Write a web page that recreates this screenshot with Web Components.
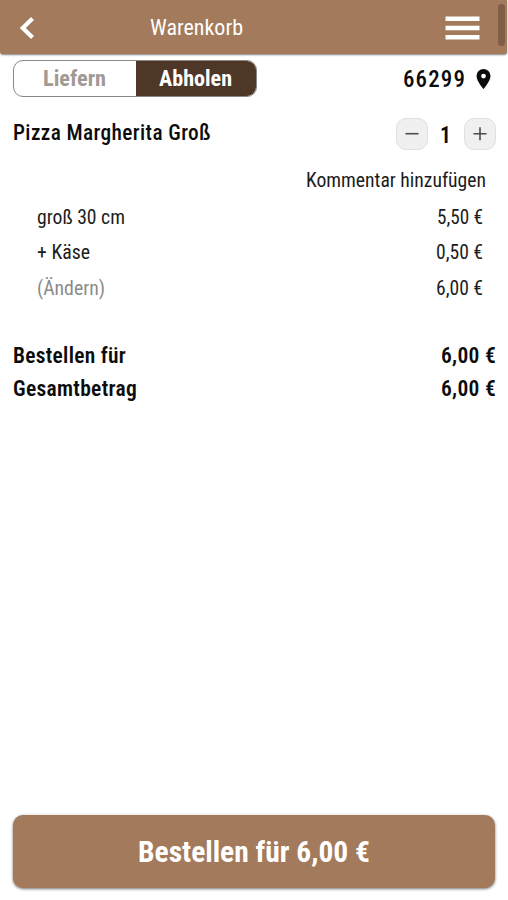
<!DOCTYPE html>
<html lang="de">
<head>
<meta charset="utf-8">
<title>Warenkorb</title>
<style>
html,body{margin:0;height:100%;background:#fff;overflow:hidden}
body{font-family:"Roboto Condensed",Roboto,"Liberation Sans",sans-serif;font-stretch:75%;color:#0c0c0c}
</style>
</head>
<body>
<cart-page></cart-page>
<script>
/* One line of text set to an exact width. */
class FitText extends HTMLElement{
  connectedCallback(){
    const r=this.attachShadow({mode:'open'});
    r.innerHTML=`<style>:host{display:block;flex:none;white-space:nowrap}
    span{display:inline-block;transform-origin:0 50%}</style><span><slot></slot></span>`;
    const w=+this.getAttribute('w');
    this.style.width=w+'px';
    const s=r.querySelector('span');
    s.style.transform=`scaleX(${w/s.getBoundingClientRect().width})`;
  }
}

class AppHeader extends HTMLElement{
  connectedCallback(){
    this.attachShadow({mode:'open'}).innerHTML=`<style>
    :host{display:grid;grid-template-columns:150px 1fr auto 16px;align-items:center;box-sizing:border-box;height:54px;width:507px;padding:0 1px 0 0;
      background:#a37a5b;color:#fff;font-size:22.5px;line-height:26px;border-radius:0 0 3px 3px;box-shadow:0 1px 2px rgba(0,0,0,.5);flex:none}
    svg{display:block}
    .back{margin:1px 0 0 19px}.menu{margin-right:10px}
    .bar{align-self:start;margin:4px 0 0 8px;width:7px;height:42px;border-radius:3.5px;background:#805d45}
    </style>
    <svg class="back" width="16" height="24" viewBox="0 0 16 24"><path d="M13.5 2.5 3.8 12 13.5 21.5" fill="none" stroke="#fff" stroke-width="4.2"/></svg>
    <slot></slot>
    <svg class="menu" width="35" height="26" viewBox="0 0 35 26"><path d="M0.5 4.8h34M0.5 14h34M0.5 23.2h34" stroke="#fff" stroke-width="4.6"/></svg>
    <div class="bar"></div>`;
  }
}

class ModeSwitch extends HTMLElement{
  connectedCallback(){
    this.attachShadow({mode:'open'}).innerHTML=`<style>
    :host{display:grid;grid-template-columns:122px 1fr;box-sizing:border-box;width:244px;height:37px;border:1px solid #8d8681;border-radius:10px;
      overflow:hidden;font-size:22px;line-height:26px;font-weight:700;background:#fff}
    div{display:flex;align-items:center;justify-content:center}
    .off{color:#a19a94;padding-right:1px}.on{background:#4f3728;color:#fff;padding-right:1px}
    </style><div class="off"><slot name="off"></slot></div><div class="on"><slot name="on"></slot></div>`;
  }
}

class StepButton extends HTMLElement{
  connectedCallback(){
    const plus=this.getAttribute('kind')==='plus';
    this.attachShadow({mode:'open'}).innerHTML=`<style>
    :host{display:block;box-sizing:border-box;width:32px;height:32px;border:1px solid #e0e0e0;border-radius:10px;background:#f0f0f0}
    svg{display:block}</style>
    <svg width="30" height="30" viewBox="0 0 30 30"><path d="M8.5 14.7h13${plus?'M15 8.2v13':''}" stroke="#4c4c4c" stroke-width="1.6"/></svg>`;
  }
}

class PriceRow extends HTMLElement{
  connectedCallback(){
    this.attachShadow({mode:'open'}).innerHTML=`<style>
    :host{display:flex;justify-content:space-between;align-items:center;font-size:20px;line-height:24px;height:35.5px;padding:0 25px 0 37px;color:#1c1c1c}
    :host([muted]) slot[name=label]{color:#8b8b8b}
    :host([total]){font-size:22px;line-height:26px;height:33px;font-weight:600;letter-spacing:.3px;padding:0 12.5px 0 13px;color:#0c0c0c}
    </style><slot name="label"></slot><slot></slot>`;
  }
}

class OrderButton extends HTMLElement{
  connectedCallback(){
    this.attachShadow({mode:'open'}).innerHTML=`<style>
    :host{display:flex;align-items:center;justify-content:center;margin:auto 13px 12px;height:73px;border-radius:10px;background:#a37a5b;
      color:#fff;font-size:30px;line-height:36px;font-weight:700;box-shadow:0 1px 3px rgba(0,0,0,.55)}
    </style><slot></slot>`;
  }
}

class CartPage extends HTMLElement{
  connectedCallback(){
    this.attachShadow({mode:'open'}).innerHTML=`<style>
    :host{display:flex;flex-direction:column;width:508px;height:900px;background:#fff}
    .top,.item{display:flex;align-items:center;justify-content:space-between;padding:0 12px 0 13px;flex:none}
    .top{padding-top:6px;height:37px}
    .zip{display:flex;align-items:center;font-size:24px;line-height:28px;font-weight:500;letter-spacing:1.2px}
    .zip fit-text{margin-top:1px}
    .zip svg{margin:0 5px 0 10px}
    .item{height:32px;margin-top:21px}
    .name{font-size:22px;line-height:26px;font-weight:550;letter-spacing:.4px;margin-top:-3px}
    .qty{display:flex;align-items:center;font-size:24px;line-height:28px;font-weight:600}
    .qty fit-text{margin:1px 13px 0 12px}
    .note{display:flex;justify-content:flex-end;font-size:20px;line-height:24px;margin:18px 22px 7px 0;color:#1c1c1c}
    .sum{margin-top:34px}
    </style>
    <app-header><fit-text w="93">Warenkorb</fit-text></app-header>
    <div class="top">
      <mode-switch><fit-text slot="off" w="63">Liefern</fit-text><fit-text slot="on" w="73">Abholen</fit-text></mode-switch>
      <div class="zip"><fit-text w="63">66299</fit-text>
        <svg width="15" height="20" viewBox="0 0 15 20"><path fill-rule="evenodd" d="M7.5 0A7 7 0 0 0 .5 7c0 5 7 13 7 13s7-8 7-13a7 7 0 0 0-7-7Zm0 4.7a2.4 2.4 0 1 1 0 4.8 2.4 2.4 0 0 1 0-4.8Z" fill="#0c0c0c"/></svg></div>
    </div>
    <div class="item">
      <fit-text class="name" w="198">Pizza Margherita Groß</fit-text>
      <div class="qty"><step-button kind="minus"></step-button><fit-text w="11">1</fit-text><step-button kind="plus"></step-button></div>
    </div>
    <div class="note"><fit-text w="180">Kommentar hinzufügen</fit-text></div>
    <price-row><fit-text slot="label" w="88">groß 30 cm</fit-text><fit-text w="46">5,50 €</fit-text></price-row>
    <price-row><fit-text slot="label" w="53">+ Käse</fit-text><fit-text w="47">0,50 €</fit-text></price-row>
    <price-row muted><fit-text slot="label" w="68">(Ändern)</fit-text><fit-text w="47">6,00 €</fit-text></price-row>
    <div class="sum">
      <price-row total><fit-text slot="label" w="113">Bestellen für</fit-text><fit-text w="55">6,00 €</fit-text></price-row>
      <price-row total><fit-text slot="label" w="124">Gesamtbetrag</fit-text><fit-text w="55">6,00 €</fit-text></price-row>
    </div>
    <order-button><fit-text w="232">Bestellen für 6,00 €</fit-text></order-button>`;
  }
}
/* Containers are defined first so fonts and sizes are in place when FitText measures. */
customElements.define('cart-page',CartPage);
customElements.define('app-header',AppHeader);
customElements.define('mode-switch',ModeSwitch);
customElements.define('step-button',StepButton);
customElements.define('price-row',PriceRow);
customElements.define('order-button',OrderButton);
customElements.define('fit-text',FitText);
</script>
</body>
</html>
